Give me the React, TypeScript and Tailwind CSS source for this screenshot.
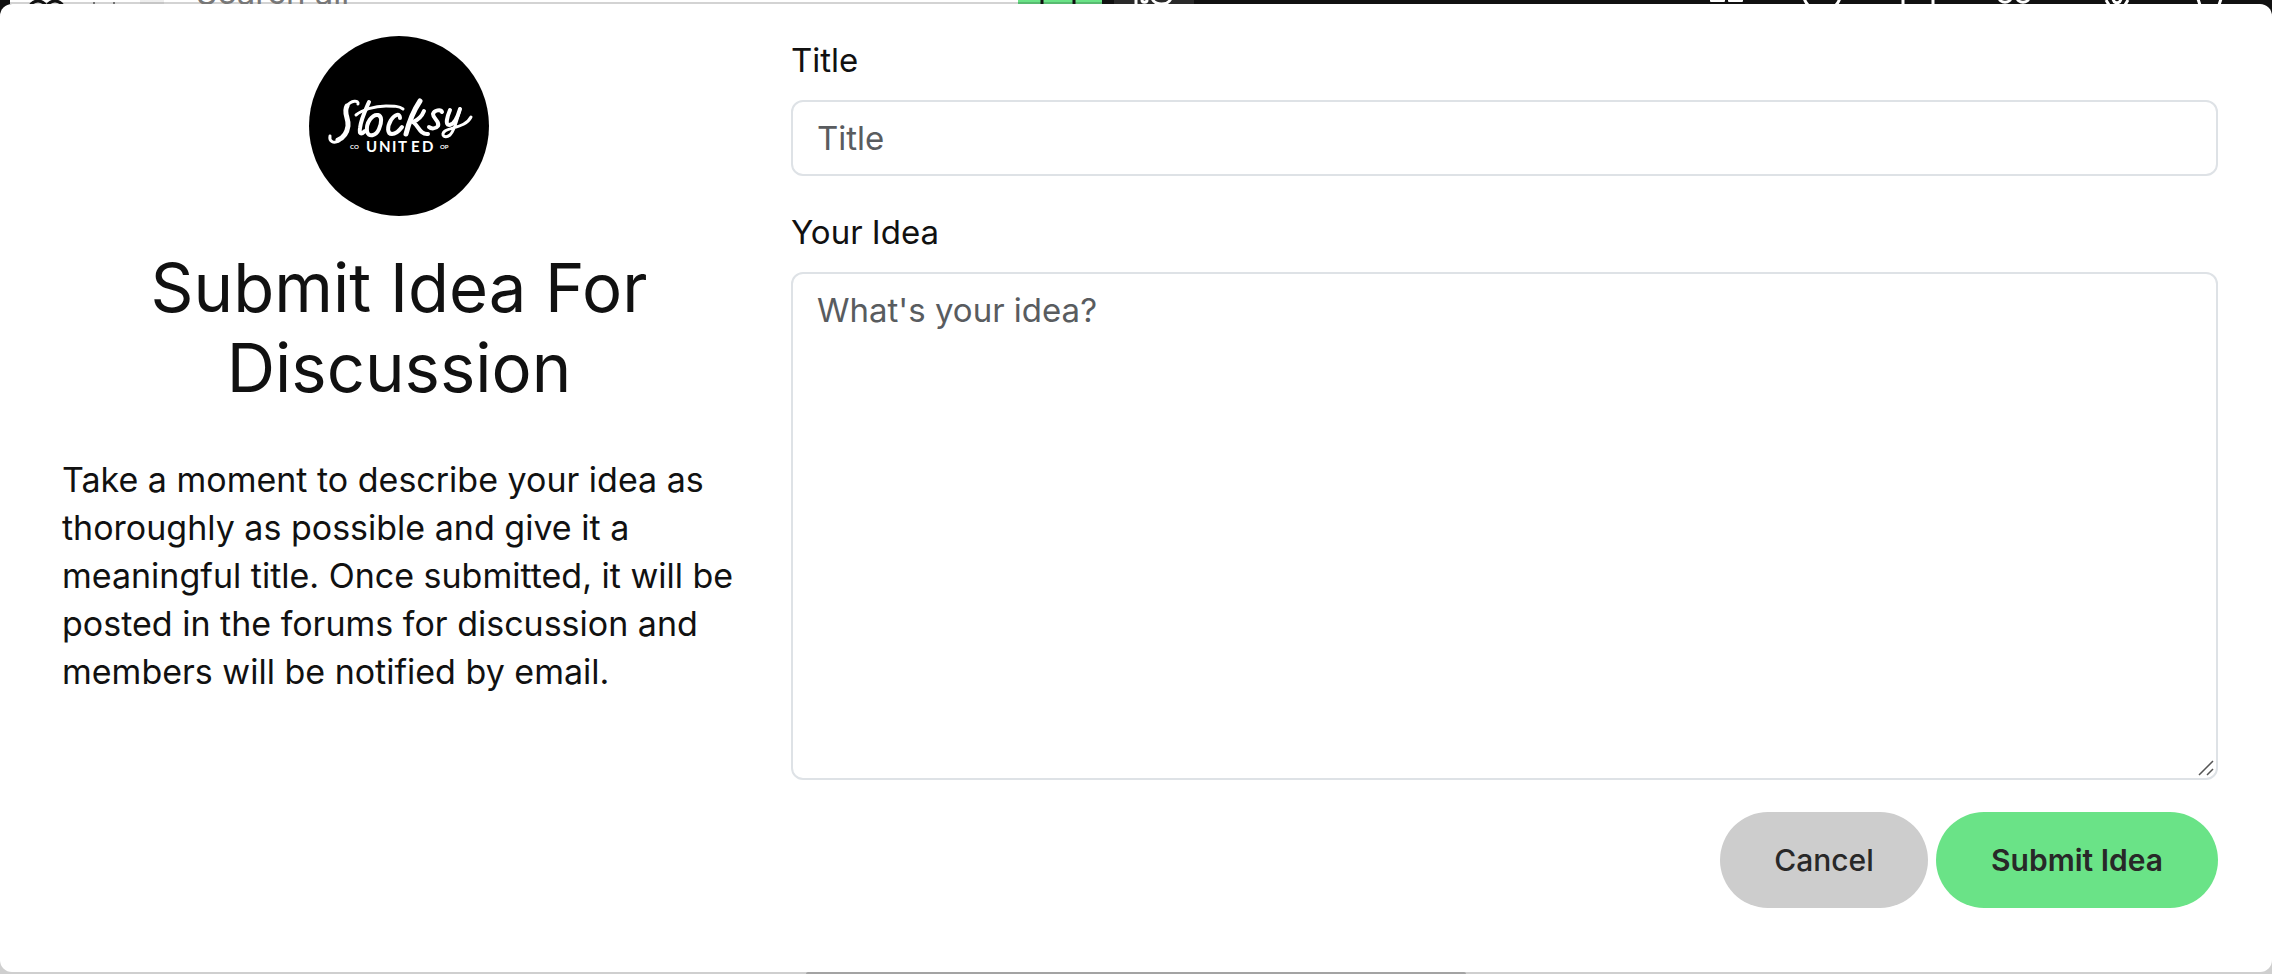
import React, { useState } from 'react'

const labelClass = 'mb-4 block text-[33px] leading-[48px]'
const fieldClass =
  'block w-full rounded-xl border-2 border-[#dee2e6] bg-white px-6 text-[33px] leading-[48px] text-[#111] placeholder:text-[#595c5f] outline-none'
const buttonClass = 'h-24 rounded-full text-[30px] text-[#282828]'

const StocksyLogo = () => (
  <svg viewBox="0 0 180 180" className="h-[180px] w-[180px]" role="img" aria-label="Stocksy United">
    <circle cx="90" cy="90" r="90" fill="#000" />
    <g fill="none" stroke="#fff" strokeLinecap="round" strokeLinejoin="round">
      {/* S */}
      <path strokeWidth="3" d="M49 68c1-4-7-4-11 2" />
      <path strokeWidth="5" d="M38 70c-4 7 2 12 1 20-1 7-5 12-10 14" />
      <path strokeWidth="3" d="M30 105c-6 3-10 0-9-5" />
      {/* t */}
      <path strokeWidth="4" d="M60 66c-4 9-8 17-9 26-1 6 1 7 5 3" />
      <path strokeWidth="3" d="M47 79c6-5 18-9 30-9 8 0 13 0 17 3" />
      {/* o */}
      <path strokeWidth="4" d="M69 79c-6-1-12 8-11 16 1 7 9 5 12-2 3-7 3-13-1-14z" />
      {/* c */}
      <path strokeWidth="4" d="M91 82c0-5-5-4-9 2-4 7-4 14 1 14 4 0 7-3 10-7" />
      {/* k */}
      <path strokeWidth="5" d="M111 65c-6 9-11 21-14 33" />
      <path strokeWidth="4" d="M115 75c-2 5-6 9-11 11" />
      <path strokeWidth="4" d="M105 87c4 2 6 12 14 11" />
      {/* s */}
      <path strokeWidth="4" d="M133 76c-1-3-8-2-9 2 0 5 7 7 5 12-2 3-7 3-9 1" />
      {/* y */}
      <path strokeWidth="4" d="M141 74c-3 7-5 15-1 15 4 0 8-6 11-16" />
      <path strokeWidth="3" d="M151 73c-3 10-5 21-10 26-5 4-10 0-5-4 7-4 21-4 26-14" />
    </g>
    <g fill="#fff" fontFamily="Lato, sans-serif">
      <text x="57 70 83 89 102 113" y="116" fontSize="15" fontWeight="700">UNITED</text>
      <text x="41" y="113" fontSize="6" fontWeight="700">CO</text>
      <text x="131" y="113" fontSize="6" fontWeight="700">OP</text>
    </g>
  </svg>
)

// icons on the right of the header, only their lower edge shows above the dialog
const navIcons = [
  { label: 'Galleries', art: <path fill="#fff" stroke="none" d="M8 0h15v1a1 1 0 0 1-1 1H9a1 1 0 0 1-1-1zM26 0h15v1a1 1 0 0 1-1 1H27a1 1 0 0 1-1-1z" /> },
  { label: 'Messages', art: <path d="M6 -2c1 3 2 5 4 7M42 -2c-1 3-2 5-4 7" /> },
  { label: 'Bookmarks', art: <path d="M9 0v5M39 0v5" /> },
  { label: 'Members', art: <path d="M9 -3c0 7 12 7 12 0M27 -3c0 7 12 7 12 0" /> },
  { label: 'Location', art: <path d="M20 0l3 5M42 0l-3 5M27 -1c1 5 7 5 8 0" /> },
  { label: 'Alerts', art: <path d="M16 -1l2 6M39 -1l-2 6" /> },
]

const Header = () => (
  <header className="flex h-1 overflow-hidden pl-[10px]">
    <div className="flex w-[1008px] items-end bg-linear-to-b from-white from-50% to-[#d3d3d3] to-50%">
      <svg viewBox="0 0 110 4" className="ml-[18px] h-1 w-[110px]" fill="none" stroke="#111" strokeWidth="3">
        <circle cx="10" cy="10" r="9" />
        <circle cx="27" cy="10" r="9" />
        <path strokeWidth="1" d="M65 3h2M85 3h2" />
      </svg>
      <div className="ml-[2px] h-1 w-6 bg-linear-to-b from-[#eee] from-50% to-[#c6c6c6] to-50%" />
      <input
        aria-label="Search all"
        placeholder="Search all"
        className="ml-8 h-6 w-[600px] text-[33px] leading-6 placeholder:text-[#777] outline-none"
      />
    </div>
    <button type="button" aria-label="Search" className="h-1 w-[84px] bg-linear-to-b from-[#6ae387] from-50% to-[#58bb71] to-50%">
      <svg viewBox="0 0 84 4" className="block h-1 w-[84px]" stroke="#111" strokeWidth="3">
        <path d="M24 0v4M56 0v4" />
      </svg>
    </button>
    <button type="button" aria-label="Image search" className="ml-3 h-1 w-20 bg-[#2a2a2a]">
      <svg viewBox="0 0 80 4" className="block h-1 w-20" fill="none" stroke="#fff" strokeWidth="3">
        <path d="M22 0v4M28 0c0 3 5 3 5 0M38 -2c2 8 17 8 19 0" />
      </svg>
    </button>
    <nav className="ml-auto flex gap-12 pr-[42px]">
      {navIcons.map((icon) => (
        <a key={icon.label} href="#" aria-label={icon.label}>
          <svg viewBox="0 0 48 4" className="block h-1 w-12" fill="none" stroke="#fff" strokeWidth="3">
            {icon.art}
          </svg>
        </a>
      ))}
    </nav>
  </header>
)

export default function App() {
  const [title, setTitle] = useState('')
  const [idea, setIdea] = useState('')

  return (
    <div className="bg-[#111] font-['Inter',sans-serif] text-[#111]">
      <Header />
      <div className="bg-linear-to-b from-[#111] from-50% to-[#cfcfcf] to-50%">
        <form
          role="dialog"
          aria-label="Submit Idea For Discussion"
          className="grid min-h-[968px] grid-cols-[674fr_1427fr] gap-[55px] rounded-xl bg-white pt-8 pr-[54px] pl-[62px]"
          onSubmit={(e) => e.preventDefault()}
        >
          <div>
            <div className="flex justify-center">
              <StocksyLogo />
            </div>
            <h1 className="mt-8 text-center text-[67px] leading-[80px]">Submit Idea For Discussion</h1>
            <p className="mt-12 text-[34px] leading-[48px]">
              Take a moment to describe your idea as thoroughly as possible and give it a meaningful title. Once
              submitted, it will be posted in the forums for discussion and members will be notified by email.
            </p>
          </div>

          <div>
            <label htmlFor="title" className={labelClass}>Title</label>
            <input
              id="title"
              placeholder="Title"
              className={`${fieldClass} h-[76px]`}
              value={title}
              onChange={(e) => setTitle(e.target.value)}
            />

            <label htmlFor="idea" className={`${labelClass} mt-8`}>Your Idea</label>
            <div className="relative">
              <textarea
                id="idea"
                placeholder="What's your idea?"
                className={`${fieldClass} h-[508px] resize-none py-3`}
                value={idea}
                onChange={(e) => setIdea(e.target.value)}
              />
              <svg viewBox="0 0 16 16" className="pointer-events-none absolute right-1 bottom-1 h-4 w-4" stroke="#555" strokeWidth="1.5">
                <path d="M1 15L15 1M9 15l6-6" />
              </svg>
            </div>

            <div className="mt-8 flex justify-end gap-2">
              <button type="button" className={`${buttonClass} min-w-[208px] bg-[#cdcdcd] font-medium`}>
                Cancel
              </button>
              <button type="submit" className={`${buttonClass} min-w-[282px] bg-[#6ae387] font-semibold`}>
                Submit Idea
              </button>
            </div>
          </div>
        </form>
        <div className="mx-auto h-[2px] w-[660px] rounded-t-sm bg-[#a3a3a3]" />
      </div>
    </div>
  )
}
